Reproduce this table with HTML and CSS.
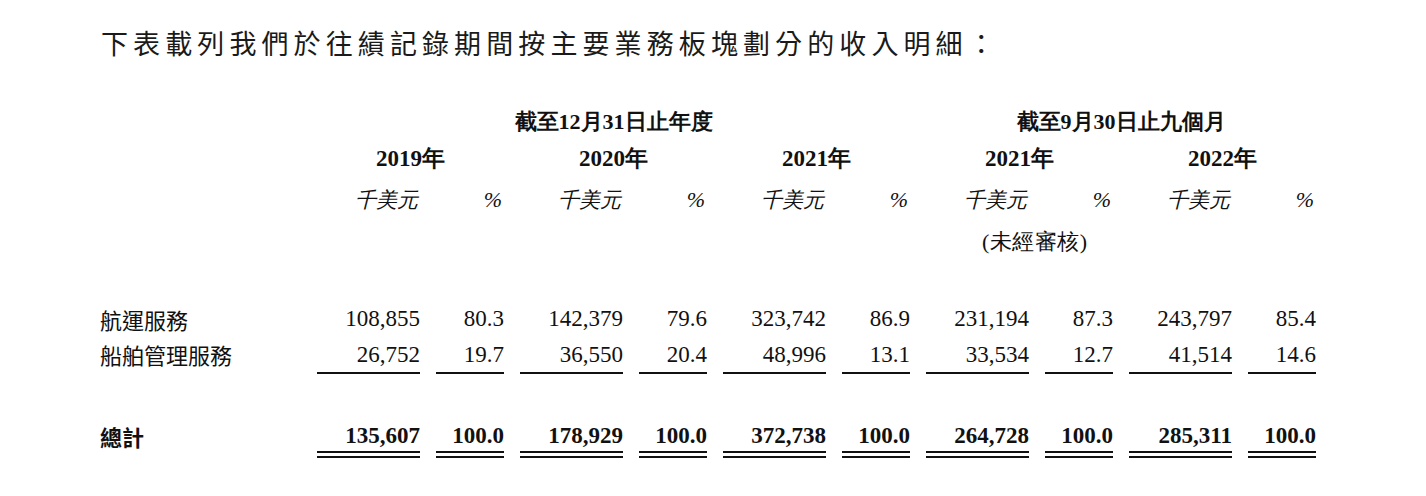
FILE: index.html
```html
<!DOCTYPE html>
<html lang="zh-Hant">
<head>
<meta charset="utf-8">
<title>收入明細</title>
<link rel="stylesheet" href="styles.css">
</head>
<body>
<div class="page">
  <p class="title">下表載列我們於往績記錄期間按主要業務板塊劃分的收入明細：</p>

  <div class="row period">
    <div class="c-span6">截至12月31日止年度</div>
    <div class="c-span4">截至9月30日止九個月</div>
  </div>

  <div class="row years">
    <div class="pair p1">2019年</div>
    <div class="pair p2">2020年</div>
    <div class="pair p3">2021年</div>
    <div class="pair p4">2021年</div>
    <div class="pair p5">2022年</div>
  </div>

  <div class="row units">
    <div class="label"></div>
    <div class="unit">千美元</div><div class="pct">%</div>
    <div class="unit">千美元</div><div class="pct">%</div>
    <div class="unit">千美元</div><div class="pct">%</div>
    <div class="unit">千美元</div><div class="pct">%</div>
    <div class="unit">千美元</div><div class="pct">%</div>
  </div>

  <div class="row unaudited">
    <div class="note">(未經審核)</div>
  </div>

  <div class="row data first">
    <div class="label">航運服務</div>
    <div class="num">108,855</div><div class="num">80.3</div>
    <div class="num">142,379</div><div class="num">79.6</div>
    <div class="num">323,742</div><div class="num">86.9</div>
    <div class="num">231,194</div><div class="num">87.3</div>
    <div class="num">243,797</div><div class="num">85.4</div>
  </div>

  <div class="row data second">
    <div class="label">船舶管理服務</div>
    <div class="num">26,752</div><div class="num">19.7</div>
    <div class="num">36,550</div><div class="num">20.4</div>
    <div class="num">48,996</div><div class="num">13.1</div>
    <div class="num">33,534</div><div class="num">12.7</div>
    <div class="num">41,514</div><div class="num">14.6</div>
  </div>

  <div class="row data total">
    <div class="label">總計</div>
    <div class="num">135,607</div><div class="num">100.0</div>
    <div class="num">178,929</div><div class="num">100.0</div>
    <div class="num">372,738</div><div class="num">100.0</div>
    <div class="num">264,728</div><div class="num">100.0</div>
    <div class="num">285,311</div><div class="num">100.0</div>
  </div>
</div>
</body>
</html>
```

FILE: styles.css
```css
html, body {
  margin: 0;
  padding: 0;
  background: #ffffff;
  color: #111111;
}

.page {
  width: 1426px;
  height: 496px;
  overflow: hidden;
}

.title {
  margin: 25px 0 0 0;
  padding-left: 101px;
  font-family: "Noto Sans CJK TC", sans-serif;
  font-size: 27px;
  line-height: 36px;
  letter-spacing: 5.1px;
  color: #1a1a1a;
  white-space: nowrap;
}

.row {
  display: grid;
  grid-template-columns: 201px repeat(5, 103px 68px);
  column-gap: 16px;
  padding-left: 100px;
  font-family: "Liberation Serif", "Times New Roman", Tinos, "DejaVu Serif", serif;
  white-space: nowrap;
}

.cjk {
  font-family: "Noto Sans CJK TC", sans-serif;
}

/* header: period */
.period {
  margin-top: 46px;
  font-size: 22px;
  line-height: 30px;
  font-weight: bold;
}
.c-span6 {
  grid-column: 2 / 8;
  text-align: center;
}
.c-span4 {
  grid-column: 8 / 12;
  text-align: center;
}

/* header: years */
.years {
  margin-top: 7px;
  font-size: 23px;
  line-height: 30px;
  font-weight: bold;
}
.pair { text-align: center; }
.p1 { grid-column: 2 / 4; }
.p2 { grid-column: 4 / 6; }
.p3 { grid-column: 6 / 8; }
.p4 { grid-column: 8 / 10; }
.p5 { grid-column: 10 / 12; }

/* header: units */
.units {
  margin-top: 11px;
  font-size: 21px;
  line-height: 30px;
  font-style: italic;
}
.unit {
  text-align: right;
  padding-right: 2px;
}
.pct {
  text-align: right;
  padding-right: 2px;
  font-size: 22px;
}

.unaudited {
  margin-top: 12px;
  font-size: 22px;
  line-height: 30px;
}
.note {
  grid-column: 8 / 10;
  padding-left: 56px;
  letter-spacing: 0.5px;
}

/* data rows */
.data {
  font-size: 23px;
}
.data .label {
  font-family: "Noto Sans CJK TC", sans-serif;
  font-size: 22px;
}
.num {
  text-align: right;
}

.first {
  margin-top: 44px;
  line-height: 36px;
}

.second {
  line-height: 35px;
}
.second .num {
  border-bottom: 2px solid #111111;
}

.total {
  margin-top: 47px;
  line-height: 30px;
  font-weight: bold;
}
.total .num {
  border-bottom: 7px double #111111;
}
```
